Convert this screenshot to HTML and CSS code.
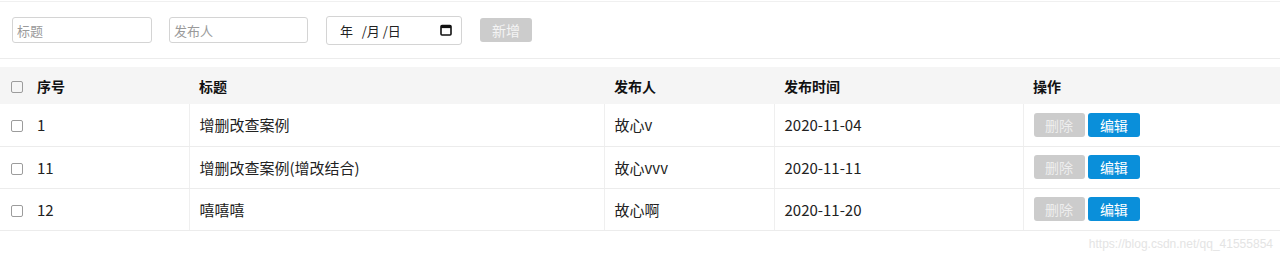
FILE: index.html
```html
<!DOCTYPE html>
<html lang="zh-CN">
<head>
  <meta charset="UTF-8" />
  <title>增删改查</title>
  <link rel="stylesheet" href="styles.css">
</head>
<body>

  <!-- 查询栏 -->
  <div class="toolbar">
    <input type="text" class="field" placeholder="标题" />
    <input type="text" class="field field-author" placeholder="发布人" />
    <div class="date-field">
      <span class="date-text">年 &nbsp;&nbsp;/月 /日</span>
      <svg class="date-icon" width="12" height="12" viewBox="0 0 12 12">
        <rect x="1" y="1.5" width="10" height="9.5" rx="1" fill="none" stroke="#111" stroke-width="1.6"/>
        <rect x="1" y="1.5" width="10" height="2.6" fill="#111"/>
      </svg>
    </div>
    <button class="btn btn-add" disabled>新增</button>
  </div>

  <table class="list">
    <colgroup>
      <col class="col-id">
      <col class="col-title">
      <col class="col-author">
      <col class="col-time">
      <col>
    </colgroup>
    <thead>
      <tr>
        <th><span class="check"></span>序号</th>
        <th>标题</th>
        <th>发布人</th>
        <th>发布时间</th>
        <th>操作</th>
      </tr>
    </thead>
    <tbody>
      <tr>
        <td><span class="check"></span>1</td>
        <td>增删改查案例</td>
        <td>故心v</td>
        <td>2020-11-04</td>
        <td><button class="btn btn-del">删除</button> <button class="btn btn-edit">编辑</button></td>
      </tr>
      <tr>
        <td><span class="check"></span>11</td>
        <td>增删改查案例(增改结合)</td>
        <td>故心vvv</td>
        <td>2020-11-11</td>
        <td><button class="btn btn-del">删除</button> <button class="btn btn-edit">编辑</button></td>
      </tr>
      <tr>
        <td><span class="check"></span>12</td>
        <td>嘻嘻嘻</td>
        <td>故心啊</td>
        <td>2020-11-20</td>
        <td><button class="btn btn-del">删除</button> <button class="btn btn-edit">编辑</button></td>
      </tr>
    </tbody>
  </table>

  <div class="watermark">https://blog.csdn.net/qq_41555854</div>

</body>
</html>
```

FILE: styles.css
```css
body {
  margin: 0;
  font-family: "Noto Sans CJK SC", "Liberation Sans", sans-serif;
  font-size: 14px;
  color: #222;
  background: #fff;
}

.toolbar {
  margin-top: 1px;
  height: 58px;
  box-sizing: border-box;
  border-top: 1px solid #f0f0f0;
  border-bottom: 1px solid #ececec;
  display: flex;
  align-items: center;
  padding-left: 12px;
}

.field {
  width: 140px;
  height: 26px;
  box-sizing: border-box;
  border: 1px solid #d4d4d4;
  border-radius: 3px;
  padding: 0 4px;
  font-family: inherit;
  font-size: 13px;
  color: #333;
  margin-right: 17px;
}

.field::placeholder {
  color: #9a9a9a;
}

.field-author {
  width: 139px;
  margin-right: 18px;
}

.date-field {
  width: 136px;
  height: 29px;
  box-sizing: border-box;
  border: 1px solid #d4d4d4;
  border-radius: 3px;
  display: flex;
  align-items: center;
  justify-content: space-between;
  padding: 0 9px 0 13px;
  margin-right: 18px;
  font-size: 13px;
  color: #222;
}

.btn {
  border: none;
  border-radius: 3px;
  font-family: inherit;
  font-size: 14px;
  color: #fff;
  width: 52px;
  height: 24px;
  padding: 0;
  cursor: pointer;
}

.btn-add {
  background: #cccccc;
  color: #f4f4f4;
}

.list {
  width: 100%;
  margin-top: 8px;
  border-collapse: collapse;
  table-layout: fixed;
}

.col-id { width: 189px; }
.col-title { width: 415px; }
.col-author { width: 170px; }
.col-time { width: 249px; }

.list th {
  background: #f5f5f5;
  height: 37px;
  text-align: left;
  font-weight: bold;
  padding: 0 10px;
  color: #111;
}

.list td {
  height: 42px;
  padding: 0 10px;
  font-size: 15px;
  border-bottom: 1px solid #ececec;
  border-left: 1px solid #efefef;
  box-sizing: border-box;
}

.list td:first-child {
  border-left: none;
}

.list th:first-child,
.list td:first-child {
  padding-left: 11px;
}

.check {
  display: inline-block;
  width: 10px;
  height: 10px;
  border: 1px solid #9c9c9c;
  border-radius: 2px;
  vertical-align: -1px;
  margin-right: 14px;
}

.btn-del {
  background: #cccccc;
  color: #eeeeee;
  width: 51px;
}

.btn-edit {
  background: #0a8fda;
}

.watermark {
  text-align: right;
  padding: 6px 7px 0 0;
  font-family: "Liberation Sans", sans-serif;
  font-size: 12px;
  color: #e4e4e4;
}
```
